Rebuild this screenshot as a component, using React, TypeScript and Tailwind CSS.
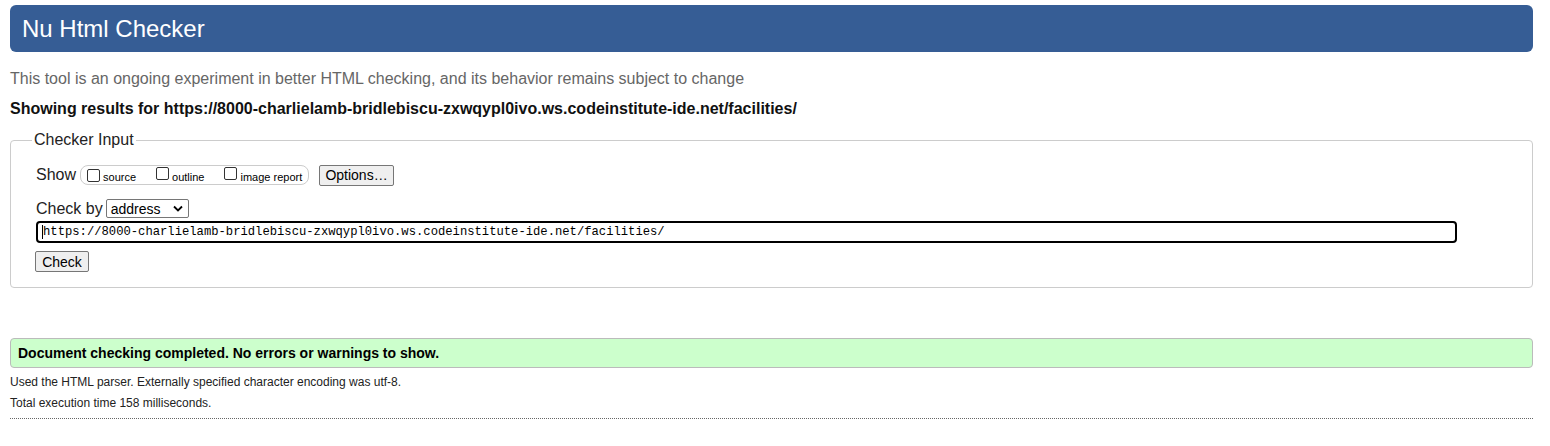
import React from "react";

const Box = () => (
  <span className="inline-block w-[13px] h-[13px] border border-[#333] rounded-[2px] bg-white shrink-0" />
);

export default function App() {
  const url = "https://8000-charlielamb-bridlebiscu-zxwqypl0ivo.ws.codeinstitute-ide.net/facilities/";
  return (
    <div className="bg-white min-h-[446px] pl-[10px] pr-[17px] font-['Liberation_Sans',Arial,sans-serif] text-black">
      <div className="h-[5px]" />
      <div className="h-[47px] rounded-[6px] bg-[#365d95] flex items-center pl-[12px] text-white text-[24px] leading-[28px]">
        Nu Html Checker
      </div>
      <p className="mt-[18px] text-[16px] leading-[18px] text-[#666]">
        This tool is an ongoing experiment in better HTML checking, and its behavior remains subject to change
      </p>
      <p className="mt-[12px] text-[16px] leading-[18px] font-bold text-[#111]">
        Showing results for {url}
      </p>
      <fieldset className="mt-[13px] border border-[#ccc] rounded-[4px] px-[25px] pb-[15px]">
        <legend className="ml-[-4px] px-[2px] text-[16px] leading-[18px] text-[#222]">Checker Input</legend>
        <div className="mt-[16px] flex items-center h-[20px]">
          <span className="text-[16px] leading-[18px] text-[#222]">Show</span>
          <div className="ml-[4px] h-[20px] w-[229px] border border-[#ccc] rounded-[8px] flex items-center pl-[6px]">
            <Box />
            <span className="ml-[3px] mt-[3px] text-[11px] leading-[12px]">source</span>
            <span className="ml-[20px]"><Box /></span>
            <span className="ml-[3px] mt-[3px] text-[11px] leading-[12px]">outline</span>
            <span className="ml-[20px]"><Box /></span>
            <span className="ml-[3px] mt-[3px] text-[11px] leading-[12px]">image report</span>
          </div>
          <div className="ml-[10px] h-[21px] w-[75px] border border-[#767676] bg-[#efefef] rounded-[2px] flex items-center justify-center text-[14px] leading-[16px]">
            Options…
          </div>
        </div>
        <div className="mt-[14px] flex items-center h-[19px]">
          <span className="text-[16px] leading-[18px] text-[#222]">Check by</span>
          <div className="ml-[3px] h-[19px] w-[83px] border border-[#767676] rounded-[2px] flex items-center pl-[4px] pr-[5px] justify-between bg-white">
            <span className="text-[14px] leading-[16px]">address</span>
            <svg width="10" height="7" viewBox="0 0 10 7">
              <path d="M1 1.5 L5 5.5 L9 1.5" fill="none" stroke="#000" strokeWidth="1.8" />
            </svg>
          </div>
        </div>
        <div className="mt-[3px] h-[22px] w-[1421px] border-2 border-black rounded-[4px] flex items-center pl-[4px]">
          <span className="inline-block w-[1px] h-[14px] bg-black" />
          <span className="font-['Liberation_Mono',monospace] text-[12.2px] leading-[14px] text-black">{url}</span>
        </div>
        <div className="mt-[8px] h-[21px] w-[54px] ml-[-1px] border border-[#767676] bg-[#efefef] rounded-[2px] flex items-center justify-center text-[14px] leading-[16px]">
          Check
        </div>
      </fieldset>
      <div className="mt-[50px] h-[30px] border border-[#bbb] rounded-[4px] bg-[#ccffcc] flex items-center pl-[7px] text-[14px] leading-[16px] font-bold">
        Document checking completed. No errors or warnings to show.
      </div>
      <p className="mt-[7px] text-[12px] leading-[14px] text-[#222]">
        Used the HTML parser. Externally specified character encoding was utf-8.
      </p>
      <p className="mt-[7px] text-[12px] leading-[14px] text-[#222]">Total execution time 158 milliseconds.</p>
      <div className="mt-[8px] border-b border-dotted border-[#666]" />
    </div>
  );
}
